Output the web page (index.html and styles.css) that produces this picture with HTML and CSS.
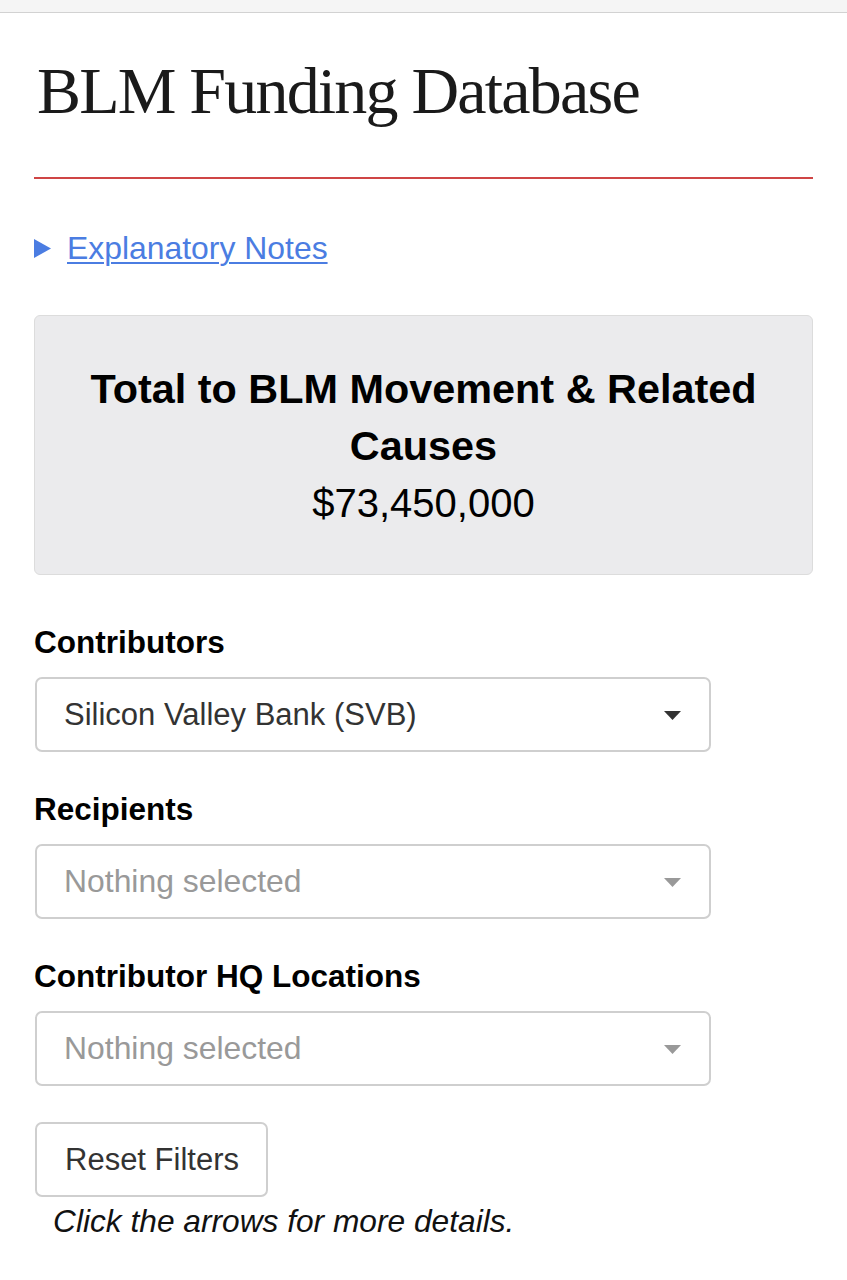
FILE: index.html
```html
<!DOCTYPE html>
<html lang="en">
<head>
<meta charset="utf-8">
<title>BLM Funding Database</title>
<link rel="stylesheet" href="styles.css">
</head>
<body>
<div class="topbar"></div>
<main class="page">
  <h1 class="title">BLM Funding Database</h1>
  <hr class="rule">
  <div class="notes">
    <svg class="marker" width="18" height="19" viewBox="0 0 18 19"><polygon points="0,0 17,9.5 0,19" fill="#4b7de2"/></svg>
    <a class="notes-link" href="#">Explanatory Notes</a>
  </div>
  <section class="total">
    <h2 class="total-title">Total to BLM Movement &amp; Related Causes</h2>
    <div class="total-amount">$73,450,000</div>
  </section>
  <div class="field">
    <label class="field-label">Contributors</label>
    <div class="select">
      <span class="select-value">Silicon Valley Bank (SVB)</span>
      <svg class="caret" width="17" height="9" viewBox="0 0 17 9"><polygon points="0,0 17,0 8.5,9" fill="#333"/></svg>
    </div>
  </div>
  <div class="field">
    <label class="field-label">Recipients</label>
    <div class="select">
      <span class="select-value placeholder">Nothing selected</span>
      <svg class="caret" width="17" height="9" viewBox="0 0 17 9"><polygon points="0,0 17,0 8.5,9" fill="#999"/></svg>
    </div>
  </div>
  <div class="field">
    <label class="field-label">Contributor HQ Locations</label>
    <div class="select">
      <span class="select-value placeholder">Nothing selected</span>
      <svg class="caret" width="17" height="9" viewBox="0 0 17 9"><polygon points="0,0 17,0 8.5,9" fill="#999"/></svg>
    </div>
  </div>
  <button class="reset" type="button">Reset Filters</button>
  <p class="hint">Click the arrows for more details.</p>
</main>
</body>
</html>
```
FILE: styles.css
```css
* { box-sizing: border-box; }
html, body { margin: 0; padding: 0; background: #fff; }
body { font-family: "Liberation Sans", Arial, sans-serif; color: #000; }

.topbar {
  height: 13px;
  background: #f5f5f5;
  border-bottom: 1px solid #d2d2d2;
}

.page {
  padding: 0 34px;
}

.title {
  font-family: "Liberation Serif", "Times New Roman", serif;
  font-weight: normal;
  font-size: 66px;
  letter-spacing: -1.8px;
  line-height: 80px;
  margin: 38px 0 0 3px;
  color: #1a1a1a;
}

.rule {
  border: 0;
  height: 2px;
  background: #cf4545;
  margin: 46px 0 0 0;
}

.notes {
  display: flex;
  align-items: center;
  gap: 15px;
  height: 44px;
  margin-top: 47px;
}
.marker { display: block; flex: none; margin-top: 1px; }
.notes-link {
  font-size: 31.9px;
  line-height: 44px;
  color: #4b7de2;
  text-decoration: underline;
  text-decoration-thickness: 2px;
  text-underline-offset: 3px;
}

.total {
  margin-top: 45px;
  background: #ebebed;
  border: 1px solid #dcdcdc;
  border-radius: 6px;
  padding: 45px 30px 42px;
  text-align: center;
}
.total-title {
  font-size: 41.4px;
  line-height: 57px;
  font-weight: bold;
  margin: 0;
}
.total-amount {
  font-size: 40px;
  line-height: 57px;
}

.field { margin-top: 45px; }
.field + .field { margin-top: 35px; }
.field-label {
  display: block;
  font-size: 31.5px;
  font-weight: bold;
  line-height: 44px;
  margin-bottom: 13px;
}
.select {
  width: 676px;
  height: 75px;
  margin-left: 1px;
  border: 2px solid #cfcfcf;
  border-radius: 7px;
  display: flex;
  align-items: center;
  justify-content: space-between;
  padding: 0 28px 0 27px;
  background: #fff;
}
.select-value {
  font-size: 31px;
  color: #333;
}
.select-value.placeholder { color: #999; font-size: 31.9px; }
.caret { display: block; flex: none; margin-top: 2px; }

.reset {
  display: block;
  margin: 36px 0 0 1px;
  width: 233px;
  height: 75px;
  border: 2px solid #cfcfcf;
  border-radius: 7px;
  background: #fff;
  font-family: "Liberation Sans", Arial, sans-serif;
  font-size: 31px;
  color: #333;
  padding: 0 0 0 1px;
  text-align: center;
}

.hint {
  margin: 0;
  padding: 2px 0 0 19px;
  font-size: 31.7px;
  font-style: italic;
  line-height: 44px;
  color: #111;
}
```
